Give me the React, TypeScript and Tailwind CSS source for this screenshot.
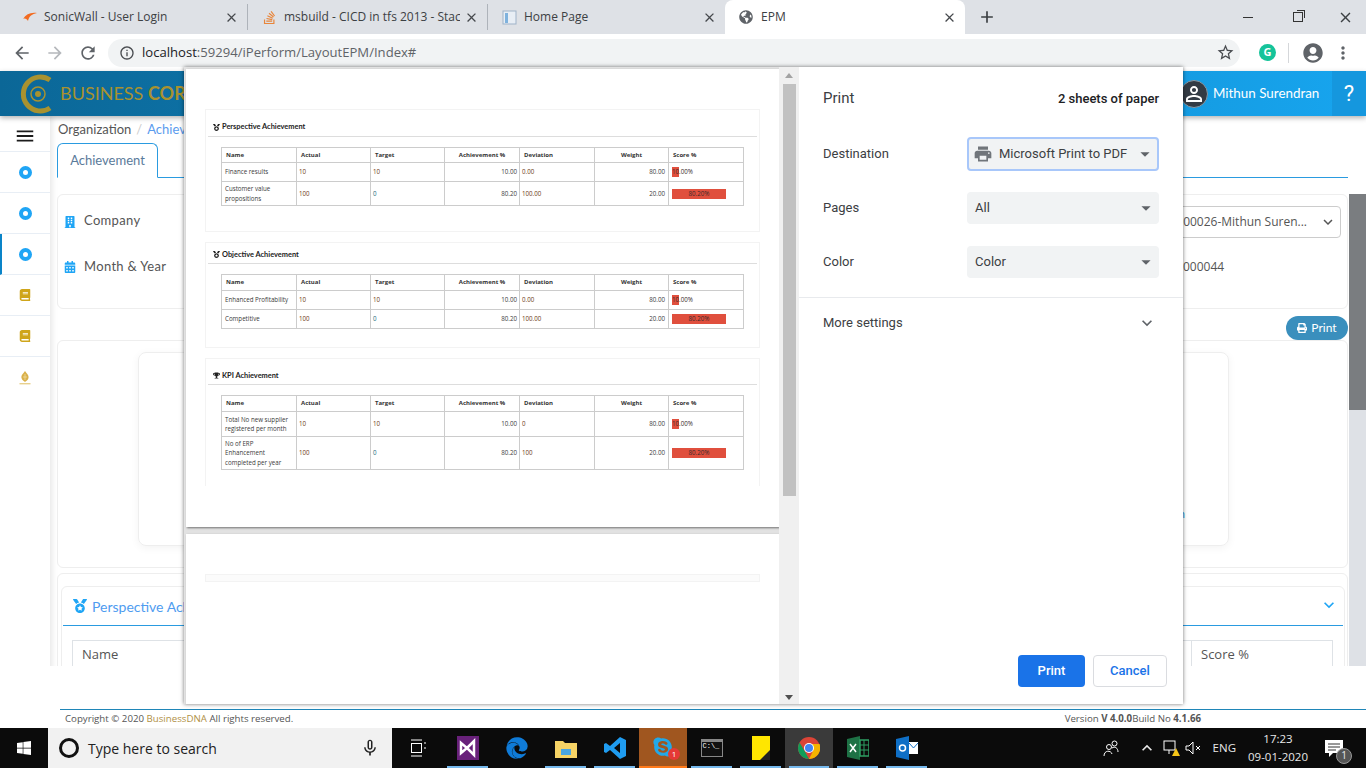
import { FaBuilding, FaCalendarAlt, FaMedal, FaTrophy, FaPrint, FaWindows, FaEdge, FaSkype, FaStackOverflow, FaGlobeAmericas, FaBook, FaUserCircle } from "react-icons/fa";
import { MdPrint, MdInfoOutline, MdStarBorder, MdMoreVert, MdArrowBack, MdArrowForward, MdRefresh, MdClose, MdAdd, MdExpandMore, MdArrowDropDown, MdMicNone, MdKeyboardArrowUp, MdMenu, MdPersonOutline } from "react-icons/md";

const Tab = ({ icon, title, width, active, noSep }: { icon: React.ReactNode; title: string; width: string; active?: boolean; noSep?: boolean }) => (
  <div className={`flex items-center shrink-0 pl-[14px] pr-[8px] ${width} ${active ? "h-full bg-white rounded-t-lg" : `h-[26px] mb-[4px] ${noSep ? "" : "border-r border-[#9aa0a6]/70"}`}`}>
    <div className="w-[22px] shrink-0 flex items-center">{icon}</div>
    <div className="flex-1 min-w-0 overflow-hidden whitespace-nowrap text-[12px] text-[#3c4043]">{title}</div>
    <MdClose className="shrink-0 ml-1 text-[#45484c]" size={15} />
  </div>
);

const SideItem = ({ children, active }: { children: React.ReactNode; active?: boolean }) => (
  <div className={`h-[41px] flex items-center justify-center border-b border-[#e8eef5] ${active ? "border-l-2 border-l-[#0a84c8] pr-[2px]" : ""}`}>
    {children}
  </div>
);

const Dot = () => <div className="w-[13px] h-[13px] rounded-full border-[4px] border-[#1fa5f5] bg-white" />;

const TaskApp = ({ children, running, width = "w-[49px]" }: { children: React.ReactNode; running?: boolean; width?: string }) => (
  <div className={`relative h-full flex items-center justify-center ${width}`}>
    {children}
    {running && <div className="absolute bottom-0 left-[4px] right-[4px] h-[2px] bg-[#76b9ed]" />}
  </div>
);

type Row = { name: string[]; actual: string; target: string; ach: string; dev: string; weight: string; h: string; fullBar: boolean };

const columns = ["w-[75px]", "w-[74px]", "w-[74px]", "w-[75px]", "w-[75px]", "w-[74px]", "w-[75px]"];

const ScoreBar = ({ full, label }: { full: boolean; label: string }) => (
  <div className="relative h-[10px] flex items-center">
    <div className={`absolute left-0 top-0 h-full bg-[#e04f3d] ${full ? "w-[54px]" : "w-[7px]"}`} />
    <span className={`relative text-[#3a2a2a] ${full ? "w-[54px] text-center" : ""}`}>{label}</span>
  </div>
);

const PreviewPanel = ({ icon, title, rows, headerH, topH, tableTop, panelH, clip }: { icon: React.ReactNode; title: string; rows: Row[]; headerH: string; topH: string; tableTop: string; panelH: string; clip?: boolean }) => (
  <div className={`mx-[19px] border-[#f3f3f3] border px-[2px] ${panelH} ${clip ? "border-b-0 overflow-hidden" : ""}`}>
    <div className={`${topH} flex items-center gap-[2px] border-b border-[#dddddd] pl-[5px] font-['Lato',sans-serif] text-[7.4px] font-bold text-[#222]`}>
      {icon}
      <span>{title}</span>
    </div>
    <div className={`${tableTop} px-[13px]`}>
      <table className="table-fixed border-collapse w-[522px] font-['Open_Sans',sans-serif] text-[6.2px] text-[#3a3a3a]">
        <thead>
          <tr className={headerH}>
            {["Name", "Actual", "Target", "Achievement %", "Deviation", "Weight", "Score %"].map((h, i) => (
              <th key={h} className={`${columns[i]} border border-[#cccccc] text-[6px] font-bold text-[#333] px-[4px] ${i === 3 || i === 5 ? "text-center" : "text-left"}`}>{h}</th>
            ))}
          </tr>
        </thead>
        <tbody>
          {rows.map((r) => (
            <tr key={r.name[0]} className={r.h}>
              <td className="border border-[#cccccc] px-[3px] leading-[9.5px]">{r.name.map((n) => <div key={n}>{n}</div>)}</td>
              <td className="border border-[#cccccc] px-[2px] text-[#6b3a10]">{r.actual}</td>
              <td className={`border border-[#cccccc] px-[2px] ${r.target === "0" ? "text-[#1c6b7a]" : "text-[#6b3a10]"}`}>{r.target}</td>
              <td className="border border-[#cccccc] px-[2px] text-right">{r.ach}</td>
              <td className="border border-[#cccccc] px-[2px] text-[#6b3a10]">{r.dev}</td>
              <td className="border border-[#cccccc] px-[3px] text-right">{r.weight}</td>
              <td className="border border-[#cccccc] px-[3px]"><ScoreBar full={r.fullBar} label={r.fullBar ? "80.20%" : "10.00%"} /></td>
            </tr>
          ))}
        </tbody>
      </table>
    </div>
  </div>
);

const PrintRow = ({ label, value, focused }: { label: string; value: string; focused?: boolean }) => (
  <div className="flex items-center justify-between pl-[24px] pr-[24px] h-[32px] mb-[22px]">
    <span className="text-[13px] text-[#3c4043]">{label}</span>
    <div className={`w-[192px] shrink-0 flex items-center justify-between bg-[#f1f3f4] rounded text-[13px] text-[#3c4043] whitespace-nowrap ${focused ? "h-[34px] border-2 border-[#a8c7fa] pl-[4px] pr-[1px]" : "h-[32px] pl-[8px] pr-[2px]"}`}>
      <span className="flex items-center gap-[6px]">
        {focused && <MdPrint size={20} className="text-[#70757a]" />}
        {value}
      </span>
      <MdArrowDropDown size={22} className="text-[#5f6368]" />
    </div>
  </div>
);

const finance: Row[] = [
  { name: ["Finance results"], actual: "10", target: "10", ach: "10.00", dev: "0.00", weight: "80.00", h: "h-[19px]", fullBar: false },
  { name: ["Customer value", "propositions"], actual: "100", target: "0", ach: "80.20", dev: "100.00", weight: "20.00", h: "h-[24px]", fullBar: true },
];
const objective: Row[] = [
  { name: ["Enhanced Profitability"], actual: "10", target: "10", ach: "10.00", dev: "0.00", weight: "80.00", h: "h-[19px]", fullBar: false },
  { name: ["Competitive"], actual: "100", target: "0", ach: "80.20", dev: "100.00", weight: "20.00", h: "h-[19px]", fullBar: true },
];
const kpi: Row[] = [
  { name: ["Total No new supplier", "registered per month"], actual: "10", target: "10", ach: "10.00", dev: "0", weight: "80.00", h: "h-[25px]", fullBar: false },
  { name: ["No of ERP", "Enhancement", "completed per year"], actual: "100", target: "0", ach: "80.20", dev: "100", weight: "20.00", h: "h-[33px]", fullBar: true },
];

const App = () => (
  <div className="relative w-[1366px] h-[768px] overflow-hidden bg-white flex flex-col font-['Open_Sans',sans-serif]">
    {/* chrome tabs */}
    <div className="h-[34px] shrink-0 bg-[#dee1e6] flex items-end pl-[8px]">
      <Tab width="w-[240px]" title="SonicWall - User Login" icon={<svg width="16" height="10" viewBox="0 0 16 10"><path d="M1 7 C4 2 9 0 15 1 C10 2 7 4 6 9 C5 7 3 6 1 7Z" fill="#f26b21" /></svg>} />
      <Tab width="w-[240px]" title="msbuild - CICD in tfs 2013 - Stack" icon={<FaStackOverflow size={15} className="text-[#e8853a]" />} />
      <Tab noSep width="w-[237px]" title="Home Page" icon={<svg width="15" height="15" viewBox="0 0 15 15"><rect x="1" y="1" width="13" height="13" fill="#e8eef5" stroke="#9fb3c8" /><rect x="3" y="3" width="3" height="10" fill="#7fb2dd" /></svg>} />
      <Tab active width="w-[240px]" title="EPM" icon={<FaGlobeAmericas size={14} className="text-[#5f6368]" />} />
      <div className="ml-[2px] flex items-center h-full w-[40px] justify-center"><MdAdd size={20} className="text-[#3c4043]" /></div>
      <div className="ml-auto flex items-center h-full text-[#3c4043]">
        <div className="w-[48px] flex justify-center"><div className="w-[10px] h-px bg-[#333]" /></div>
        <div className="w-[52px] flex justify-center">
          <div className="relative w-[10px] h-[10px] border border-[#333]">
            <div className="absolute -top-[3px] -right-[3px] w-[8px] h-[8px] border-t border-r border-[#333]" />
          </div>
        </div>
        <div className="w-[42px] flex justify-center"><MdClose size={17} /></div>
      </div>
    </div>

    {/* chrome toolbar */}
    <div className="h-[37px] shrink-0 bg-white flex items-center text-[#5f6368]">
      <div className="w-[108px] flex items-center pl-[12px] gap-[13px]">
        <MdArrowBack size={20} />
        <MdArrowForward size={20} className="text-[#b5b8bc]" />
        <MdRefresh size={20} />
      </div>
      <div className="w-[1132px] h-[28px] rounded-full bg-[#f1f3f4] flex items-center pl-[11px] pr-[5px]">
        <MdInfoOutline size={16} className="text-[#494c50]" />
        <span className="ml-[7px] text-[13.1px] text-[#5f6368]"><span className="text-[#202124]">localhost</span>:59294/iPerform/LayoutEPM/Index#</span>
        <MdStarBorder size={19} className="ml-auto text-[#494c50]" />
      </div>
      <div className="flex-1 flex items-center pl-[19px]">
        <div className="w-[17px] h-[17px] rounded-full bg-[#15c39a] text-white text-[11px] font-bold flex items-center justify-center">G</div>
        <div className="w-px h-[20px] bg-[#d5d7da] ml-[12px]" />
        <FaUserCircle size={20} className="ml-[14px] text-[#5f6368]" />
        <MdMoreVert size={20} className="ml-[10px] text-[#5f6368]" />
      </div>
    </div>

    {/* app */}
    <div className="h-[45px] shrink-0 bg-gradient-to-r from-[#0b6797] to-[#17a5ef] flex items-center relative z-10 shadow-[0_2px_5px_rgba(0,0,0,0.3)]">
      <div className="ml-[20px] flex items-center">
        <svg width="36" height="40" viewBox="0 0 36 40">
          <path d="M30 6 A17 17 0 1 0 30 34" fill="none" stroke="#a8922f" strokeWidth="5" />
          <circle cx="18" cy="20" r="7" fill="none" stroke="#a8922f" strokeWidth="1.5" />
          <circle cx="18" cy="20" r="3" fill="#a8922f" />
        </svg>
        <span className="ml-[4px] text-[18px] text-[#a8922f] font-['Lato',sans-serif] whitespace-nowrap">BUSINESS <b>CORE</b></span>
      </div>
      <div className="ml-auto flex items-center h-full">
        <div className="w-[28px] h-[28px] rounded-full bg-[#333b44] border border-[#8899a6] flex items-center justify-center"><MdPersonOutline size={24} className="text-white" /></div>
        <span className="ml-[5px] text-[13.4px] text-white font-['Lato',sans-serif] w-[119px]">Mithun Surendran</span>
        <div className="w-[34px] h-full bg-[#1597de] flex items-center justify-center text-white text-[22px] font-['Roboto',sans-serif]">?</div>
      </div>
    </div>

    <div className="flex-1 min-h-0 flex">
      <div className="w-[50px] shrink-0 shadow-[2px_0_6px_rgba(0,0,0,0.1)] bg-white flex flex-col">
        <div className="h-[36px] pt-[4px] flex items-center justify-center border-b border-[#e8eef5]"><MdMenu size={22} className="text-[#1c1c1c]" /></div>
        <SideItem><Dot /></SideItem>
        <SideItem><Dot /></SideItem>
        <SideItem active><Dot /></SideItem>
        <SideItem><FaBook size={12} className="text-[#cfa51a]" /></SideItem>
        <SideItem><FaBook size={12} className="text-[#cfa51a]" /></SideItem>
        <div className="h-[41px] flex items-center justify-center">
          <svg width="12" height="16" viewBox="0 0 12 16"><path d="M6 1 C8 4 10 5 9.5 8 C9 10.5 7 11 6 12 C5 11 3 10.5 2.5 8 C2 5 4 4 6 1Z" fill="#d9b04a" /><path d="M6 4 V10 M4 7 H8" stroke="#f3e2a8" strokeWidth="0.7" /><rect x="0.5" y="13" width="11" height="1.4" fill="#e8d08c" /></svg>
        </div>
      </div>

      <div className="flex-1 min-w-0 flex flex-col">
        <div className="flex-1 min-h-0 flex overflow-hidden">
          <div className="flex-1 min-w-0 pl-[7px] pr-[1px] font-['Lato',sans-serif]">
            <div className="h-[27px] pl-[1px] flex items-center text-[13px] text-[#555]">
              <span>Organization</span>
              <span className="mx-[5px] text-[#ccc]">/</span>
              <span className="text-[#5a9bee]">Achievement</span>
            </div>
            <div className="h-[35px] border-b border-[#2a9be0] flex">
              <div className="w-[101px] h-[35px] border border-b-white border-[#2a9be0] rounded-t-md flex items-center justify-center text-[13px] text-[#5a7a9a] bg-white">Achievement</div>
            </div>
            <div className="mt-[16px] h-[115px] border border-[#eeeeee] rounded-md pl-[6px] pr-[7px] flex flex-col text-[13px] text-[#555]">
              <div className="mt-[11px] h-[32px] flex items-center">
                <FaBuilding size={12} className="text-[#1fa5f5]" />
                <span className="ml-[8px] tracking-wide -mt-[2px]">Company</span>
                <div className="ml-auto w-[300px] h-[32px] border border-[#cccccc] rounded-sm flex items-center justify-end pr-[3px] mr-[-1px] font-['Open_Sans',sans-serif] text-[12px] text-[#555]">
                  <span>000026-Mithun Suren...</span>
                  <MdExpandMore size={18} className="ml-[12px]" />
                </div>
              </div>
              <div className="mt-[13px] h-[32px] flex items-center">
                <FaCalendarAlt size={12} className="text-[#1fa5f5]" />
                <span className="ml-[8px] tracking-wide">Month &amp; Year</span>
                <span className="ml-auto w-[158px] mr-[-1px] text-[12px] font-['Open_Sans',sans-serif]">000044</span>
              </div>
            </div>
            <div className="relative h-[31px]">
              <div className="absolute right-0 top-[7px] w-[62px] h-[24px] rounded-full bg-[#3a8fbd] flex items-center justify-center gap-[4px] text-[12px] text-white z-10"><FaPrint size={10} />Print</div>
            </div>
            <div className="h-[228px] border border-[#eeeeee] rounded-md pt-[11px] px-[80px]">
              <div className="relative h-[194px] w-[1091px] border border-[#eeeeee] rounded-lg shadow-[0_2px_8px_rgba(0,0,0,0.05)]">
                <span className="absolute right-[43px] top-[153px] text-[11px] text-[#2a9be0]">n</span>
              </div>
            </div>
            <div className="mt-[5px] h-[94px] border border-[#eeeeee] rounded-t-md pl-[3px] pr-[2px] pt-[12px]">
              <div className="border border-[#eeeeee] rounded-t-md h-[81px] px-[1px]">
                <div className="h-[39px] border-b border-[#2a9be0] flex items-center pl-[10px] justify-between">
                  <span className="flex items-center gap-[5px] text-[14px] text-[#4f9cf0]"><FaMedal size={14} className="text-[#1fa5f5]" />Perspective Achievement</span>
                  <MdExpandMore size={20} className="text-[#1fa5f5] mr-[4px] -mt-[2px]" />
                </div>
                <div className="mt-[14px] ml-[9px] mr-[10px] h-[28px] border border-b-0 border-[#dee2e6] flex items-center text-[13px] text-[#555] pl-[9px]">
                  <span className="font-['Open_Sans',sans-serif]">Name</span>
                  <span className="ml-auto w-[141px] h-full border-l border-[#dee2e6] pl-[9px] flex items-center font-['Open_Sans',sans-serif]">Score %</span>
                </div>
              </div>
            </div>
          </div>
          <div className="w-[17px] shrink-0 flex flex-col mt-[78px] bg-[#dee1e6]">
            <div className="h-[216px] bg-[#7a7d80]" />
          </div>
        </div>
        <div className="h-[62px] shrink-0 bg-white flex flex-col justify-end">
          <div className="ml-[10px] h-[19px] border-t border-[#1f86b8] flex items-center justify-between text-[9.7px] text-[#555] pl-[5px] pr-[165px]">
            <span>Copyright © 2020 <span className="text-[#b08f45]">BusinessDNA</span> All rights reserved.</span>
            <span>Version <b>V 4.0.0</b>Build No <b>4.1.66</b></span>
          </div>
        </div>
      </div>
    </div>

    {/* windows taskbar */}
    <div className="h-[40px] shrink-0 bg-[#0b0b0b] flex items-center text-white">
      <div className="w-[48px] flex justify-center"><FaWindows size={16} /></div>
      <div className="w-[344px] h-full bg-[#f1f1f1] flex items-center pl-[11px] pr-[12px] text-[#222]">
        <div className="w-[20px] h-[20px] rounded-full border-[3px] border-[#111]" />
        <span className="ml-[9px] text-[14px] font-['Open_Sans',sans-serif]">Type here to search</span>
        <MdMicNone size={20} className="ml-auto" />
      </div>
      <TaskApp width="w-[51px]">
        <svg width="16" height="18" viewBox="0 0 16 18" fill="none" stroke="white"><path d="M1 1h11M1 17h11" /><rect x="1.5" y="4.5" width="10" height="9" /><path d="M15 3v2M15 8v2" /></svg>
      </TaskApp>
      <TaskApp running>
        <svg width="22" height="24" viewBox="0 0 22 24"><rect x="0" y="0" width="22" height="24" fill="#68217a" /><path d="M4 7 L10 12 L4 17Z M10 12 L17 5 V19Z" fill="none" stroke="white" strokeWidth="2.5" /></svg>
      </TaskApp>
      <TaskApp><FaEdge size={22} className="text-[#0f7bd8]" /></TaskApp>
      <TaskApp running>
        <svg width="22" height="20" viewBox="0 0 22 20"><path d="M0 3h8l2 2h12v15H0Z" fill="#f6d365" /><rect x="6" y="11" width="10" height="6" fill="#4aa6e0" /></svg>
      </TaskApp>
      <TaskApp running>
        <svg width="24" height="24" viewBox="0 0 24 24"><path d="M17 1 L23 4 V20 L17 23 L7 14 L3 17 L1 16 V8 L3 7 L7 10Z M17 7 L11 12 L17 17Z" fill="#1f9cf0" fillRule="evenodd" /></svg>
      </TaskApp>
      <div className="w-[48px] h-full relative bg-[#a0561f] flex justify-center items-center border-b-2 border-[#ff7a1a]">
        <FaSkype size={22} className="text-[#22a8e8]" />
        <div className="absolute right-[7px] bottom-[6px] w-[12px] h-[12px] rounded-full bg-[#e53935] text-[8px] flex items-center justify-center">1</div>
      </div>
      <TaskApp running>
        <div className="w-[22px] h-[18px] bg-[#111] border border-[#888] border-t-[3px] text-[7px] leading-[8px] pl-[1px] font-['Liberation_Mono',monospace]">C:\_</div>
      </TaskApp>
      <TaskApp running>
        <svg width="18" height="24" viewBox="0 0 18 24"><path d="M0 0h18v24H0Z" fill="#ffe600" /><path d="M18 14 L8 24 H18Z" fill="#222" /></svg>
      </TaskApp>
      <TaskApp running width="w-[48px] bg-[#3a3a3a]">
        <svg width="22" height="22" viewBox="0 0 22 22"><circle cx="11" cy="11" r="11" fill="#db4437" /><path d="M11 22 A11 11 0 0 1 1.5 5.5 L6 13Z" fill="#0f9d58" /><path d="M11 22 A11 11 0 0 0 21.5 7 H11 L15 14Z" fill="#f4b400" /><circle cx="11" cy="11" r="5" fill="#fff" /><circle cx="11" cy="11" r="4" fill="#4285f4" /></svg>
      </TaskApp>
      <TaskApp running>
        <svg width="22" height="24" viewBox="0 0 22 24"><path d="M0 3 L13 0 V24 L0 21Z" fill="#1e7145" /><rect x="13" y="4" width="9" height="16" fill="none" stroke="#2e9e63" strokeWidth="1.5" /><path d="M13 9h9M13 14h9M17 4v16" stroke="#2e9e63" /><path d="M3 8 L9 16 M9 8 L3 16" stroke="white" strokeWidth="1.5" /></svg>
      </TaskApp>
      <TaskApp running>
        <svg width="22" height="24" viewBox="0 0 22 24"><path d="M0 3 L13 0 V24 L0 21Z" fill="#0f6fc6" /><rect x="13" y="6" width="9" height="12" fill="#fff" /><path d="M13 7 L17.5 12 L22 7" fill="none" stroke="#0f6fc6" /><circle cx="6.5" cy="12" r="3" fill="none" stroke="white" strokeWidth="1.5" /></svg>
      </TaskApp>
      <div className="ml-auto flex items-center h-full text-[#e8e8e8]">
        <svg width="18" height="18" viewBox="0 0 18 18" fill="none" stroke="white"><circle cx="7" cy="8" r="2.5" /><circle cx="12.5" cy="4.5" r="2.5" /><path d="M2 17 C2 11 9 11 10 15 M10 9 C13 7 16 9 16 13" /></svg>
        <MdKeyboardArrowUp size={20} className="ml-[17px]" />
        <svg className="ml-[6px]" width="18" height="18" viewBox="0 0 18 18" fill="none" stroke="white"><rect x="1" y="2" width="11" height="9" /><path d="M6 11v4" /><path d="M13 9 L17 17 H9Z" fill="#f5c518" stroke="none" /></svg>
        <svg className="ml-[3px]" width="18" height="18" viewBox="0 0 18 18" fill="none" stroke="white"><path d="M2 7h3l4-4v12l-4-4H2Z" /><path d="M12 7l4 4M16 7l-4 4" /></svg>
        <span className="ml-[11px] text-[11.5px]">ENG</span>
        <div className="ml-[4px] w-[76px] flex flex-col items-center text-[11.5px] leading-[18px]"><span>17:23</span><span>09-01-2020</span></div>
        <div className="relative w-[50px] pr-[14px] flex justify-center">
          <svg width="18" height="17" viewBox="0 0 18 17"><path d="M0 0h18v13H8l-4 4v-4H0Z" fill="white" /><path d="M3 4h12M3 7h12M3 10h8" stroke="#333" /></svg>
          <div className="absolute left-[20px] top-[8px] w-[16px] h-[16px] rounded-full bg-[#555] border border-[#999] text-[10px] flex items-center justify-center">1</div>
        </div>
      </div>
    </div>

    {/* print dialog */}
    <div className="absolute left-[184px] top-[67px] w-[999px] h-[637px] bg-white flex shadow-[0_0_4px_rgba(0,0,0,0.55)] z-20">
      <div className="w-[595px] shrink-0 flex flex-col gap-[7px] pl-[2px] pt-[2px] bg-[#e2e2e2] overflow-hidden">
        <div className="w-[593px] h-[458px] shrink-0 bg-white shadow-[1px_1px_2px_rgba(0,0,0,0.5)] pt-[40px]">
          <PreviewPanel icon={<FaMedal size={7} />} title="Perspective Achievement" rows={finance} headerH="h-[15px]" topH="h-[27px] pt-[8px]" tableTop="pt-[10px]" panelH="h-[123px] mb-[10px]" />
          <PreviewPanel icon={<FaMedal size={7} />} title="Objective Achievement" rows={objective} headerH="h-[16px]" topH="h-[21px] pt-[3px]" tableTop="pt-[10px]" panelH="h-[106px] mb-[10px]" />
          <PreviewPanel clip icon={<FaTrophy size={7} />} title="KPI Achievement" rows={kpi} headerH="h-[16px]" topH="h-[26px] pt-[8px]" tableTop="pt-[10px]" panelH="h-[128px]" />
        </div>
        <div className="w-[593px] flex-1 bg-white shadow-[1px_1px_2px_rgba(0,0,0,0.5)] pt-[40px]">
          <div className="mx-[19px] h-[8px] border border-[#f3f3f3] bg-[#fbfbfb]" />
        </div>
      </div>
      <div className="w-[20px] shrink-0 bg-[#f0f0f0] flex flex-col items-center pt-[6px] pb-[4px]">
        <div className="w-0 h-0 border-x-[4px] border-x-transparent border-b-[5px] border-b-[#a3a3a3]" />
        <div className="mt-[6px] w-[13px] h-[412px] bg-[#c1c1c1]" />
        <div className="mt-auto w-0 h-0 border-x-[4px] border-x-transparent border-t-[5px] border-t-[#505050]" />
      </div>
      <div className="flex-1 flex flex-col font-['Roboto',sans-serif]">
        <div className="h-[71px] pb-[8px] pl-[24px] pr-[24px] flex items-center justify-between">
          <span className="text-[15px] text-[#3c4043]">Print</span>
          <span className="text-[13px] font-medium text-[#202124]">2 sheets of paper</span>
        </div>
        <PrintRow focused label="Destination" value="Microsoft Print to PDF" />
        <PrintRow label="Pages" value="All" />
        <PrintRow label="Color" value="Color" />
        <div className="border-t border-[#e8eaed] -mt-[3px] h-[50px] flex items-center justify-between pl-[24px] pr-[26px] text-[13px] text-[#3c4043]">
          More settings
          <MdExpandMore size={20} className="text-[#5f6368]" />
        </div>
        <div className="mt-auto pb-[17px] pr-[16px] flex justify-end gap-[8px]">
          <div className="w-[67px] h-[32px] rounded bg-[#1a73e8] text-white text-[13px] font-medium flex items-center justify-center">Print</div>
          <div className="w-[74px] h-[32px] rounded border border-[#dadce0] text-[#1a73e8] text-[13px] font-medium flex items-center justify-center">Cancel</div>
        </div>
      </div>
    </div>
  </div>
);

export default App;
